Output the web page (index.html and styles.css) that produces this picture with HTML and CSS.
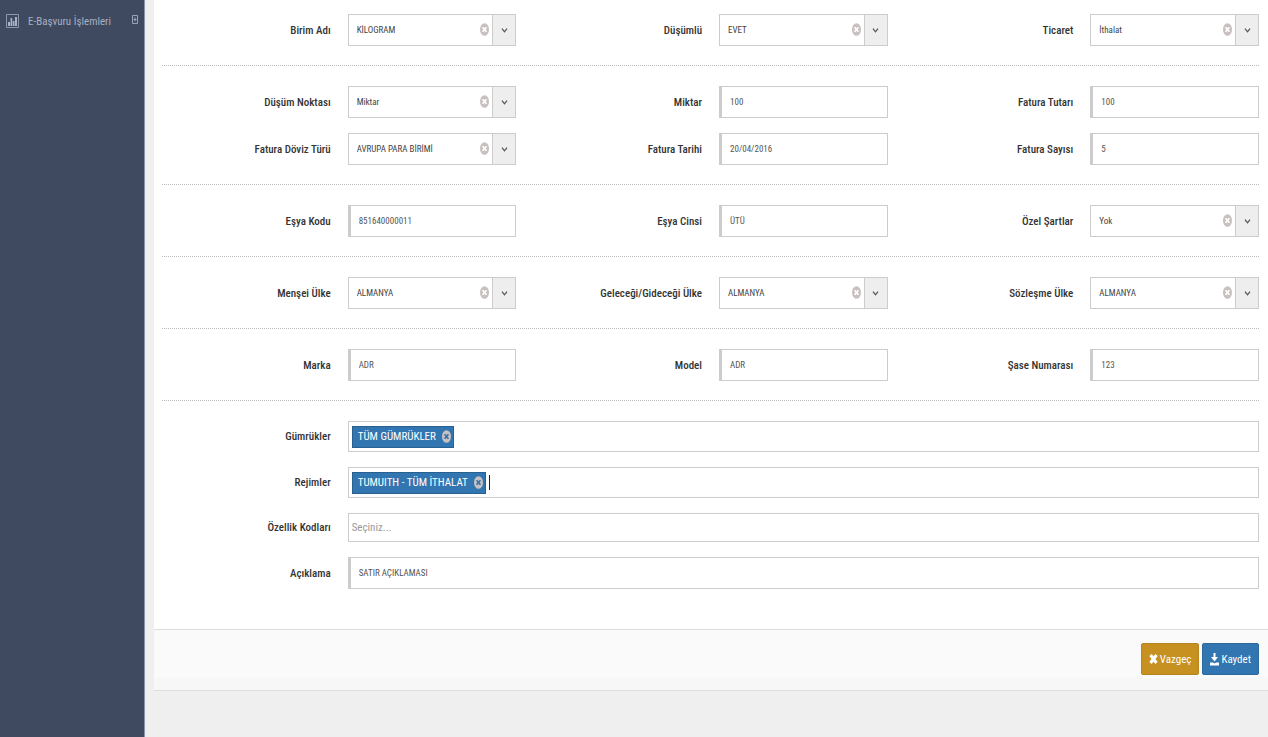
FILE: index.html
```html
<!DOCTYPE html>
<html lang="tr">
<head>
<meta charset="utf-8">
<meta name="viewport" content="width=device-width, initial-scale=1">
<title>E-Başvuru İşlemleri</title>
<link rel="stylesheet" href="styles.css">
</head>
<body>
<svg class="sprite" aria-hidden="true">
  <symbol id="clear" viewBox="0 0 9 13"><ellipse cx="4.5" cy="6.5" rx="4.5" ry="6.3" fill="#c9c0c0"/><path d="M2.6 4.2 6.4 8.8M6.4 4.2 2.6 8.8" stroke="currentColor" stroke-width="1.7" fill="none"/></symbol>
  <symbol id="chevron" viewBox="0 0 7 5"><path d="M1 .7 3.5 3.8 6 .7" stroke="#555" stroke-width="1.3" fill="none"/></symbol>
</svg>
<div class="layout">
  <nav class="sidebar">
    <a class="menu-item" href="#">
      <svg class="menu-icon" viewBox="0 0 13 16"><path d="M.5 1.5h12v13H.5z" fill="none" stroke="#8b95ab"/><path d="M2 9h2v4H2zM4.5 5h1.7v8H4.500zM6.800 8h1.700v5H6.800zM9 4h2v9H9z" fill="#a9b2c4"/></svg>
      <span class="menu-text">E-Başvuru İşlemleri</span>
      <svg class="menu-plus" viewBox="0 0 6 9"><path d="M.5.5h5v8h-5zM1.5 4.5h3M3 2.5v4" fill="none" stroke="#9aa4b8"/></svg>
    </a>
  </nav>
  <main class="content">
    <form class="panel">
      <div class="form-body">
        <section class="section">
          <label for="birim">Birim Adı</label>
          <div class="combo"><select id="birim"><option>KİLOGRAM</option></select><button type="button" class="clear" aria-label="Temizle"><svg><use href="#clear"/></svg></button><span class="arrow"><svg><use href="#chevron"/></svg></span></div>
          <label for="dusumlu">Düşümlü</label>
          <div class="combo"><select id="dusumlu"><option>EVET</option></select><button type="button" class="clear" aria-label="Temizle"><svg><use href="#clear"/></svg></button><span class="arrow"><svg><use href="#chevron"/></svg></span></div>
          <label for="ticaret">Ticaret</label>
          <div class="combo"><select id="ticaret"><option>İthalat</option></select><button type="button" class="clear" aria-label="Temizle"><svg><use href="#clear"/></svg></button><span class="arrow"><svg><use href="#chevron"/></svg></span></div>
        </section>
        <section class="section">
          <label for="nokta">Düşüm Noktası</label>
          <div class="combo"><select id="nokta"><option>Miktar</option></select><button type="button" class="clear" aria-label="Temizle"><svg><use href="#clear"/></svg></button><span class="arrow"><svg><use href="#chevron"/></svg></span></div>
          <label for="miktar">Miktar</label>
          <input class="text" id="miktar" type="text" value="100">
          <label for="tutar">Fatura Tutarı</label>
          <input class="text" id="tutar" type="text" value="100">
          <label for="doviz">Fatura Döviz Türü</label>
          <div class="combo"><select id="doviz"><option>AVRUPA PARA BİRİMİ</option></select><button type="button" class="clear" aria-label="Temizle"><svg><use href="#clear"/></svg></button><span class="arrow"><svg><use href="#chevron"/></svg></span></div>
          <label for="tarih">Fatura Tarihi</label>
          <input class="text" id="tarih" type="text" value="20/04/2016">
          <label for="sayi">Fatura Sayısı</label>
          <input class="text" id="sayi" type="text" value="5">
        </section>
        <section class="section">
          <label for="kod">Eşya Kodu</label>
          <input class="text" id="kod" type="text" value="851640000011">
          <label for="cins">Eşya Cinsi</label>
          <input class="text" id="cins" type="text" value="ÜTÜ">
          <label for="sart">Özel Şartlar</label>
          <div class="combo"><select id="sart"><option>Yok</option></select><button type="button" class="clear" aria-label="Temizle"><svg><use href="#clear"/></svg></button><span class="arrow"><svg><use href="#chevron"/></svg></span></div>
        </section>
        <section class="section">
          <label for="mensei">Menşei Ülke</label>
          <div class="combo"><select id="mensei"><option>ALMANYA</option></select><button type="button" class="clear" aria-label="Temizle"><svg><use href="#clear"/></svg></button><span class="arrow"><svg><use href="#chevron"/></svg></span></div>
          <label for="gelecek">Geleceği/Gideceği Ülke</label>
          <div class="combo"><select id="gelecek"><option>ALMANYA</option></select><button type="button" class="clear" aria-label="Temizle"><svg><use href="#clear"/></svg></button><span class="arrow"><svg><use href="#chevron"/></svg></span></div>
          <label for="sozlesme">Sözleşme Ülke</label>
          <div class="combo"><select id="sozlesme"><option>ALMANYA</option></select><button type="button" class="clear" aria-label="Temizle"><svg><use href="#clear"/></svg></button><span class="arrow"><svg><use href="#chevron"/></svg></span></div>
        </section>
        <section class="section">
          <label for="marka">Marka</label>
          <input class="text" id="marka" type="text" value="ADR">
          <label for="model">Model</label>
          <input class="text" id="model" type="text" value="ADR">
          <label for="sase">Şase Numarası</label>
          <input class="text" id="sase" type="text" value="123">
        </section>
        <section class="section">
          <label for="gumruk">Gümrükler</label>
          <div class="tags wide"><span class="tag">TÜM GÜMRÜKLER<button type="button" class="tag-clear" aria-label="Kaldır"><svg><use href="#clear"/></svg></button></span><input id="gumruk" type="text"></div>
          <label for="rejim">Rejimler</label>
          <div class="tags wide"><span class="tag">TUMUITH - TÜM İTHALAT<button type="button" class="tag-clear" aria-label="Kaldır"><svg><use href="#clear"/></svg></button></span><span class="caret"></span><input id="rejim" type="text"></div>
          <label for="ozellik">Özellik Kodları</label>
          <div class="tags empty wide"><input id="ozellik" type="text" placeholder="Seçiniz..."></div>
          <label for="aciklama">Açıklama</label>
          <input class="text wide" id="aciklama" type="text" value="SATIR AÇIKLAMASI">
        </section>
      </div>
      <footer class="actions">
        <button type="button" class="btn cancel"><svg viewBox="0 0 9 13"><path d="M1.500 2 7.500 10M7.500 2 1.500 10" stroke="#fff" stroke-width="3"/></svg>Vazgeç</button>
        <button type="submit" class="btn save"><svg viewBox="0 0 9 13"><path d="M3.500 0h2v4H8L4.500 8.500 1 4h2.500zM0 9.500h3L4.500 10.500 6 9.500h3V12.500H0z" fill="#fff"/></svg>Kaydet</button>
      </footer>
      <div class="panel-end"></div>
    </form>
  </main>
</div>
</body>
</html>
```
FILE: styles.css
```css
* { box-sizing: border-box; }
body {
  margin: 0;
  background: #efefef;
  color: #333;
  font-family: "Arial Narrow", "Roboto Condensed", "Liberation Sans", sans-serif;
  font-size: 11px;
}
input, select, button { font: inherit; margin: 0; }
.sprite { position: absolute; width: 0; height: 0; }
.layout { display: flex; min-height: 100vh; }
.sidebar {
  flex: 0 0 145px;
  background: #3f4a60;
  border-right: 1px solid #8c93a3;
}
.menu-item {
  display: flex;
  align-items: center;
  height: 42px;
  padding: 0 6px;
  color: #a5afc2;
  text-decoration: none;
}
.menu-icon { width: 13px; height: 16px; margin-right: 9px; }
.menu-text { flex: 1; white-space: nowrap; }
.menu-plus { width: 6px; height: 9px; margin-bottom: 3px; }
.content { flex: 1; min-width: 0; padding-left: 9px; }
.panel { background: #fff; border-bottom: 1px solid #ddd; }
.form-body { padding: 0 9px 21px 8px; }
.section {
  display: grid;
  grid-template-columns: repeat(6, minmax(0, 1fr));
  gap: 15px 17px;
  align-items: center;
  padding: 20px 0 19px;
  border-bottom: 1px dotted #bbb;
}
.section:first-child { padding-top: 14px; }
.section:last-child { border-bottom: 0; }
.wide { grid-column: span 5; }
label { text-align: right; font-weight: 500; white-space: nowrap; }
.combo { position: relative; height: 32px; }
.combo select {
  appearance: none;
  width: 100%;
  height: 32px;
  padding: 0 48px 0 8px;
  border: 1px solid #ccc;
  border-radius: 0;
  background: #fff;
  color: #444;
  font-size: 9px;
  line-height: 16px;
}
.clear {
  position: absolute;
  top: 9px;
  right: 27px;
  width: 9px;
  height: 13px;
  padding: 0;
  border: 0;
  background: none;
  color: #fff;
}
.clear svg, .tag-clear svg { display: block; width: 9px; height: 13px; }
.arrow {
  position: absolute;
  top: 1px;
  right: 1px;
  bottom: 1px;
  display: flex;
  align-items: center;
  justify-content: center;
  width: 23px;
  border-left: 1px solid #ccc;
  background: #eee;
  pointer-events: none;
}
.arrow svg { width: 7px; height: 5px; }
.text {
  width: 100%;
  height: 32px;
  padding: 0 8px 1px;
  border: 1px solid #ccc;
  border-left-width: 3px;
  background: #fff;
  color: #555;
  font-size: 9px;
}
.tags {
  display: flex;
  align-items: center;
  height: 31px;
  padding: 0 3px;
  border: 1px solid #ccc;
  background: #fff;
}
.tags.empty { height: 29px; }
.tags input {
  flex: 1;
  min-width: 0;
  padding: 0;
  border: 0;
  outline: 0;
  background: none;
}
.tags input::placeholder { color: #999; opacity: 1; }
.tag {
  display: flex;
  align-items: center;
  gap: 6px;
  height: 22px;
  padding: 0 2px 0 5px;
  border: 1px solid #286090;
  background: #3276b1;
  color: #fff;
  white-space: nowrap;
}
.tag-clear { padding: 0; border: 0; background: none; color: #3276b1; }
.caret { width: 1px; height: 15px; margin-left: 3px; background: #222; }
.actions {
  display: flex;
  justify-content: flex-end;
  gap: 3px;
  padding: 13px 9px 3px;
  border-top: 1px solid #ddd;
  background: #fafafa;
}
.btn {
  display: flex;
  align-items: center;
  justify-content: center;
  gap: 2px;
  height: 32px;
  padding: 0 7px;
  border: 1px solid #2c699d;
  border-radius: 2px;
  background: #3276b1;
  color: #fff;
}
.btn svg { width: 9px; height: 13px; }
.cancel { background: #c79121; border-color: #b7851e; }
.panel-end { height: 12px; background: #f7f7f7; }
```
